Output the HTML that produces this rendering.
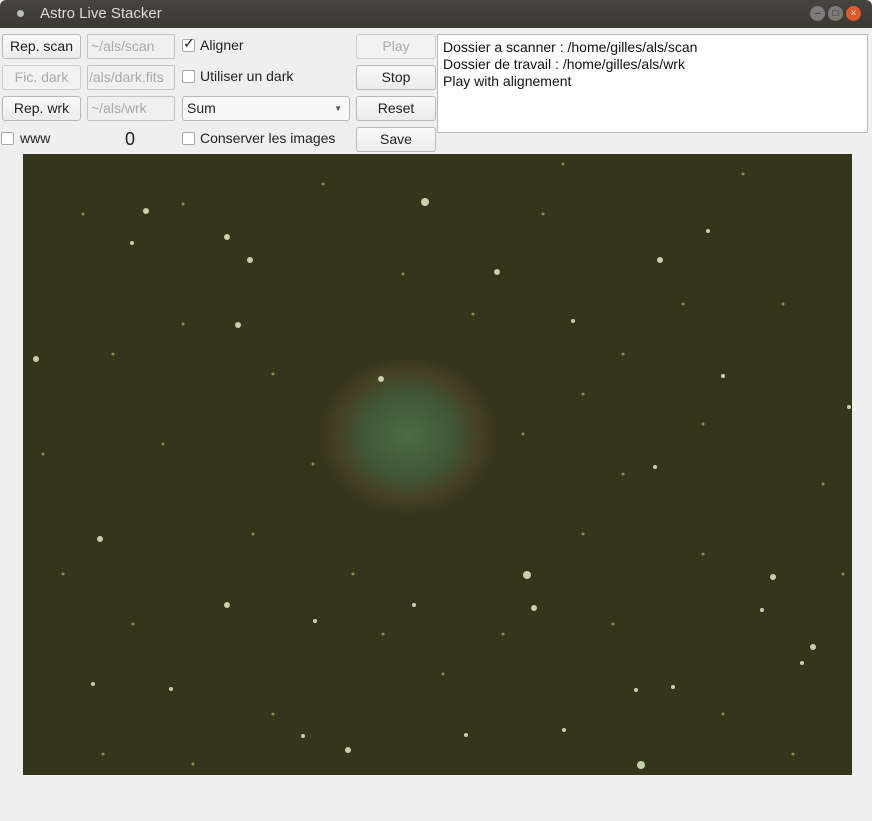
<!DOCTYPE html>
<html><head><style>
body{margin:0;width:872px;height:821px;background:#efefef;font-family:"Liberation Sans",sans-serif;position:relative;overflow:hidden;font-size:14px;color:#222}
.tb{position:absolute;left:0;top:0;width:872px;height:28px;background:linear-gradient(#45443f,#3a3935);border-radius:6px 6px 0 0}
.tb .t{position:absolute;left:40px;top:5px;color:#dfdbd2;font-size:15px}
.tb .d{position:absolute;left:17px;top:10px;width:7px;height:7px;border-radius:50%;background:#bbb}
.c{position:absolute;top:6px;width:15px;height:15px;border-radius:50%;background:#7c7b77;font-size:10px;text-align:center;line-height:15px;color:#333}
.b{position:absolute;box-sizing:border-box;border:1px solid #b8b8b8;border-radius:3px;background:linear-gradient(#fafafa,#ececec);text-align:center;line-height:23px;height:25px}
.dis{color:#aaa;background:#f2f2f2;border-color:#ccc}
.e{position:absolute;box-sizing:border-box;border:1px solid #c4c4c4;border-radius:2px;height:25px;line-height:23px;padding-left:3px;color:#aaa;background:#f0f0f0;overflow:hidden;white-space:nowrap}
.cb{position:absolute;width:13px;height:13px;box-sizing:border-box;border:1px solid #aaa;background:#fff;border-radius:2px}
.l{position:absolute}
</style></head><body>
<div class="tb"><div class="d"></div><div class="t">Astro Live Stacker</div>
<div class="c" style="left:810px">–</div><div class="c" style="left:828px">□</div><div class="c" style="left:846px;background:#e2582b;color:#fff">×</div></div>
<div class="b" style="left:2px;top:34px;width:79px">Rep. scan</div>
<div class="b dis" style="left:2px;top:65px;width:79px">Fic. dark</div>
<div class="b" style="left:2px;top:96px;width:79px">Rep. wrk</div>
<div class="e" style="left:87px;top:34px;width:88px">~/als/scan</div>
<div class="e" style="left:87px;top:65px;width:88px;padding-left:1px">/als/dark.fits</div>
<div class="e" style="left:87px;top:96px;width:88px">~/als/wrk</div>
<div class="cb" style="left:182px;top:39px"></div><div class="l" style="left:183px;top:35px;font-size:14px">✓</div>
<div class="l" style="left:200px;top:37px">Aligner</div>
<div class="cb" style="left:182px;top:70px"></div><div class="l" style="left:200px;top:68px">Utiliser un dark</div>
<div class="b" style="left:182px;top:96px;width:168px;text-align:left;padding-left:4px;background:#f8f8f8">Sum<span style="position:absolute;right:7px;top:0;font-size:8px;color:#555">▼</span></div>
<div class="cb" style="left:1px;top:132px"></div><div class="l" style="left:20px;top:130px">www</div>
<div class="l" style="left:125px;top:129px;font-size:18px">0</div>
<div class="cb" style="left:182px;top:132px"></div><div class="l" style="left:200px;top:130px">Conserver les images</div>
<div class="b dis" style="left:356px;top:34px;width:80px">Play</div>
<div class="b" style="left:356px;top:65px;width:80px">Stop</div>
<div class="b" style="left:356px;top:96px;width:80px">Reset</div>
<div class="b" style="left:356px;top:127px;width:80px">Save</div>
<div style="position:absolute;left:437px;top:34px;width:431px;height:99px;box-sizing:border-box;border:1px solid #bbb;background:#fff;padding:4px 5px;line-height:17px;color:#111">Dossier a scanner : /home/gilles/als/scan<br>Dossier de travail : /home/gilles/als/wrk<br>Play with alignement</div>
<div style="position:absolute;left:23px;top:154px;width:829px;height:621px;background:#34351b">
<svg width="829" height="621" style="position:absolute;left:0;top:0">
<defs><radialGradient id="n" cx="50%" cy="45%" r="50%"><stop offset="0" stop-color="#4a6e44"/><stop offset="0.5" stop-color="#425a36" stop-opacity="0.9"/><stop offset="0.8" stop-color="#4e4426" stop-opacity="0.6"/><stop offset="1" stop-color="#34351b" stop-opacity="0"/></radialGradient></defs>
<ellipse cx="385" cy="290" rx="95" ry="85" fill="url(#n)"/>
<g fill="#c8d0a8">
<circle cx="402" cy="48" r="4"/><circle cx="123" cy="57" r="3"/><circle cx="204" cy="83" r="3"/><circle cx="227" cy="106" r="3"/><circle cx="109" cy="89" r="2"/><circle cx="474" cy="118" r="3"/><circle cx="215" cy="171" r="3"/><circle cx="13" cy="205" r="3"/><circle cx="685" cy="77" r="2"/><circle cx="637" cy="106" r="3"/><circle cx="504" cy="421" r="4"/><circle cx="511" cy="454" r="3"/><circle cx="618" cy="611" r="4"/><circle cx="325" cy="596" r="3"/><circle cx="204" cy="451" r="3"/><circle cx="77" cy="385" r="3"/><circle cx="750" cy="423" r="3"/><circle cx="790" cy="493" r="3"/><circle cx="70" cy="530" r="2"/><circle cx="358" cy="225" r="3"/><circle cx="632" cy="313" r="2"/><circle cx="391" cy="451" r="2"/><circle cx="292" cy="467" r="2"/><circle cx="550" cy="167" r="2"/><circle cx="700" cy="222" r="2"/><circle cx="826" cy="253" r="2"/><circle cx="739" cy="456" r="2"/><circle cx="779" cy="509" r="2"/><circle cx="650" cy="533" r="2"/><circle cx="613" cy="536" r="2"/><circle cx="541" cy="576" r="2"/><circle cx="148" cy="535" r="2"/><circle cx="280" cy="582" r="2"/><circle cx="443" cy="581" r="2"/>
</g>
<g fill="#a8a050" opacity="0.8">
<circle cx="60" cy="60" r="1.5"/><circle cx="160" cy="170" r="1.5"/><circle cx="250" cy="220" r="1.5"/><circle cx="300" cy="30" r="1.5"/><circle cx="520" cy="60" r="1.5"/><circle cx="600" cy="200" r="1.5"/><circle cx="760" cy="150" r="1.5"/><circle cx="800" cy="330" r="1.5"/><circle cx="680" cy="270" r="1.5"/><circle cx="560" cy="380" r="1.5"/><circle cx="420" cy="520" r="1.5"/><circle cx="230" cy="380" r="1.5"/><circle cx="140" cy="290" r="1.5"/><circle cx="40" cy="420" r="1.5"/><circle cx="110" cy="470" r="1.5"/><circle cx="330" cy="420" r="1.5"/><circle cx="480" cy="480" r="1.5"/><circle cx="590" cy="470" r="1.5"/><circle cx="700" cy="560" r="1.5"/><circle cx="770" cy="600" r="1.5"/><circle cx="250" cy="560" r="1.5"/><circle cx="170" cy="610" r="1.5"/><circle cx="380" cy="120" r="1.5"/><circle cx="450" cy="160" r="1.5"/><circle cx="90" cy="200" r="1.5"/><circle cx="20" cy="300" r="1.5"/><circle cx="680" cy="400" r="1.5"/><circle cx="820" cy="420" r="1.5"/><circle cx="500" cy="280" r="1.5"/><circle cx="600" cy="320" r="1.5"/><circle cx="160" cy="50" r="1.5"/><circle cx="720" cy="20" r="1.5"/><circle cx="540" cy="10" r="1.5"/><circle cx="290" cy="310" r="1.5"/><circle cx="80" cy="600" r="1.5"/><circle cx="560" cy="240" r="1.5"/><circle cx="660" cy="150" r="1.5"/><circle cx="360" cy="480" r="1.5"/></g>
</svg></div>
</body></html>
